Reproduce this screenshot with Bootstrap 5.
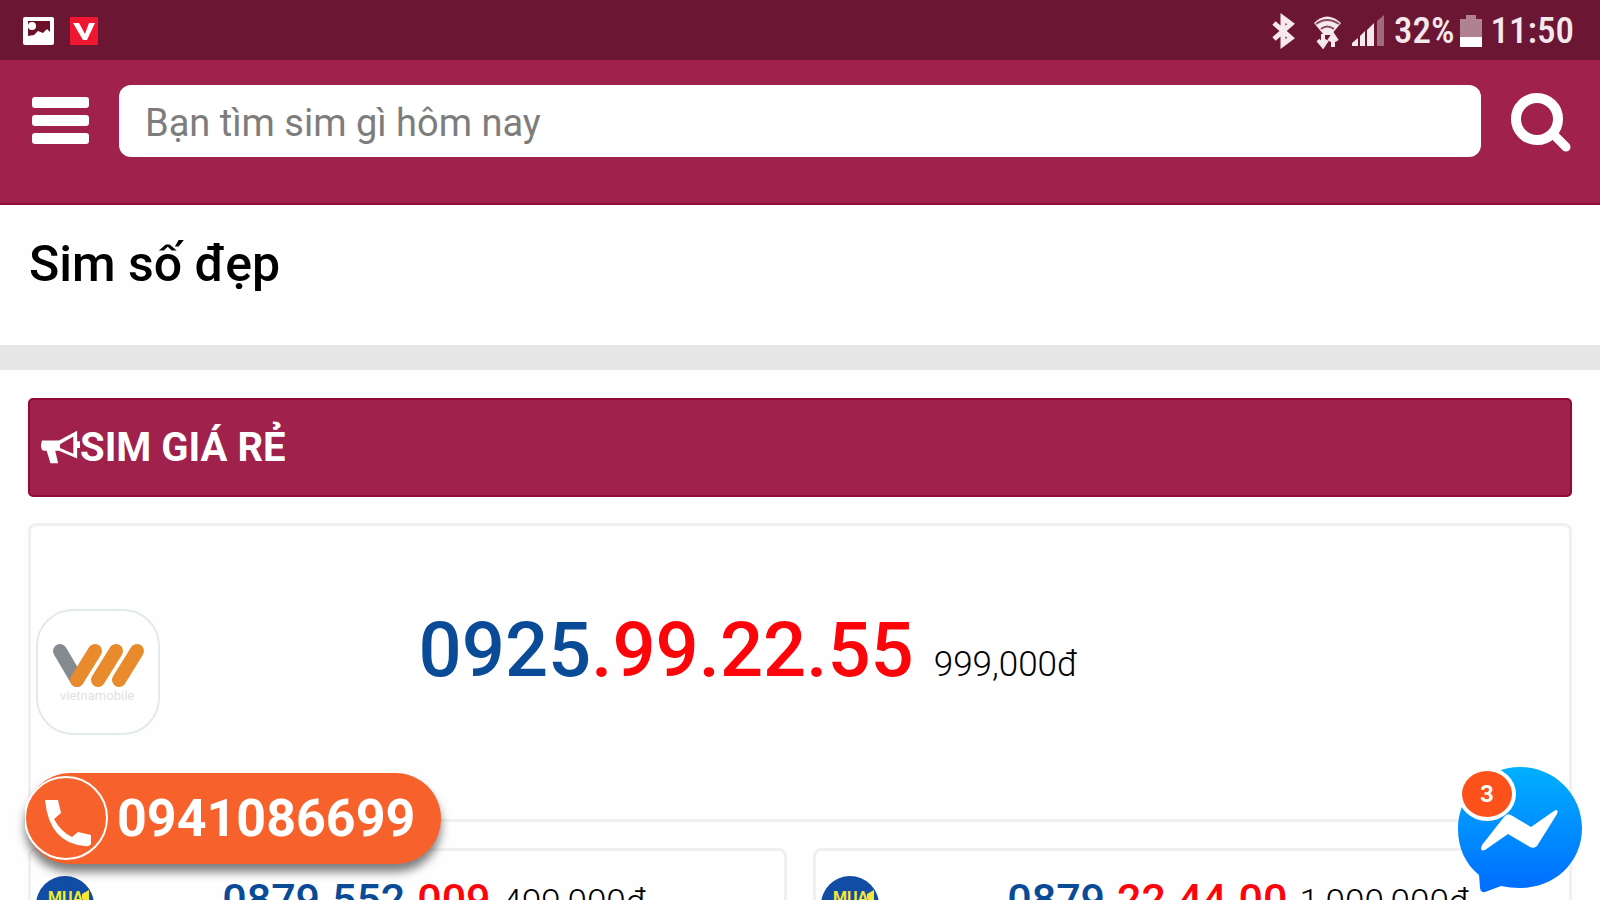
<!DOCTYPE html>
<html lang="vi">
<head>
<meta charset="utf-8">
<meta name="viewport" content="width=device-width, initial-scale=1">
<title>Sim số đẹp</title>
<link href="https://cdn.jsdelivr.net/npm/bootstrap@5.3.0/dist/css/bootstrap.min.css" rel="stylesheet">
<script src="https://cdn.jsdelivr.net/npm/bootstrap@5.3.0/dist/js/bootstrap.bundle.min.js" defer></script>
<style>
  body { font-family: Roboto, "Noto Sans", sans-serif; color: #000; background: #fefefe; height: 100vh; overflow: hidden; }
  .status-bar { background: #6b1734; height: 60px; padding: 2px 26px 0 22px; color: #f6e9ee; }
  .status-icons { gap: 13px; }
  .status-text { font-family: "Roboto Condensed", "Liberation Sans Narrow", Roboto, sans-serif; font-size: 37px; font-weight: 500; line-height: 58px; }
  .site-header { background: #9f214c; height: 145px; padding: 25px 28px 0 30px; border-bottom: 2px solid #930a3c; gap: 29px; }
  .icon-btn { border: 0; background: none; padding: 0; line-height: 0; }
  .search-box { height: 72px; border: 0; border-radius: 12px; font-size: 38px; padding: 3px 26px 0; color: #333; background: #fff; }
  .search-box::placeholder { color: #7d7d7d; opacity: 1; }
  .page-title { font-size: 50px; font-weight: 500; line-height: 60px; padding: 29px 29px 51px; }
  .divider-band { height: 25px; background: #e6e6e6; }
  .section-bar { background: #9f214c; border: 2px solid #930a34; border-radius: 5px; height: 99px; padding: 0 10px; color: #fff; }
  .section-bar h2 { font-size: 40px; font-weight: 700; line-height: 94px; }
  .content-area { padding: 28px 28px 0 28px; }
  .sim-list { gap: 26px; }
  .sim-card { border: 3px solid #f0f0f0; border-radius: 8px; background: #fefefe; color: #000; text-decoration: none; }
  .sim-logo { padding-left: 5px; }
  .sim-text { padding-left: 3px; }
  .sim-no { font-weight: 500; color: #0a4b98; }
  .sim-no span { color: #fd040a; }
  .sim-price { font-size: 35px; font-weight: 300; }
  .sim-wide { height: 299px; }
  .sim-wide .sim-text { padding-bottom: 46px; }
  .sim-wide .sim-no { font-size: 76px; line-height: 84px; margin-right: 16px; }
  .sim-half { height: 220px; padding-top: 23px; }
  .sim-half .sim-no { font-size: 43px; line-height: 50px; margin-right: 8px; }
  .call-pill { left: 25px; bottom: 36px; height: 91px; border-radius: 46px; background: #f7622c; color: #fff; font-size: 52px; font-weight: 700; padding-right: 26px; gap: 8px; box-shadow: 0 8px 10px rgba(0,0,0,.5); text-decoration: none; }
  .chat-btn { right: 16px; bottom: 5px; }
  .chat-count { left: 6px; top: 6px; width: 50px; height: 46px; border-radius: 50%; background: #fd511c; color: #fff; font-size: 24px; font-weight: 700; line-height: 46px; box-shadow: 0 0 0 4px #fff; }
</style>
</head>
<body>
<div class="status-bar d-flex align-items-center justify-content-between">
  <div class="d-flex align-items-center status-icons">
    <svg width="34" height="32" viewBox="0 0 34 32"><rect x="1" y="2" width="31" height="28" rx="2" fill="#fff"/><path d="M6 6H28V17L25 14L21 18L16 16L12 20L6 21Z" fill="#6b1027"/><circle cx="10" cy="11" r="4" fill="#fff"/></svg>
    <svg width="30" height="30" viewBox="0 0 30 30"><rect x="1" y="1" width="28" height="28" rx="1" fill="#ef1730"/><path d="M4 7H10L16 18L20 7H26L18 24H14Z" fill="#fff"/></svg>
  </div>
  <div class="d-flex align-items-center status-text">
    <svg width="25" height="36" viewBox="0 0 25 36" fill="none" stroke="#f6e9ee" stroke-width="5"><path d="M3 10L20 25L12 31V5L20 11L3 26"/></svg>
    <svg class="ms-3" width="32" height="36" viewBox="0 0 32 36"><path d="M2 10Q15 -3 29 10L19 22H12Z" fill="#f6e9ee"/><path d="M4 11Q15 3 27 11M9 16Q15 11 22 16" fill="none" stroke="#8d4a62" stroke-width="2"/><path d="M11 21V32M6 27L11 33L15 27M21 34V22M17 28L21 22L25 28" fill="none" stroke="#f6e9ee" stroke-width="4"/></svg>
    <svg class="ms-2" width="34" height="34" viewBox="0 0 34 34" fill="#f6e9ee"><path d="M0 32V29L6 24V32ZM8 32V22L13 17V32ZM15 32V16L22 9V32Z"/><path d="M25 32V7L32 1V32Z" opacity=".4"/></svg>
    <span class="ms-2">32%</span>
    <svg class="ms-1" width="24" height="34" viewBox="0 0 24 34"><path d="M1 5H7V1H17V5H23V33H1Z" fill="#b08093"/><path d="M1 23H23V33H1Z" fill="#fff"/></svg>
    <span class="ms-2">11:50</span>
  </div>
</div>
<header class="site-header d-flex align-items-start">
  <button class="icon-btn mt-2" type="button" aria-label="Menu">
    <svg width="60" height="56" viewBox="0 0 60 56" fill="#fff"><rect x="2" y="4" width="57" height="11" rx="3"/><rect x="2" y="22" width="57" height="11" rx="3"/><rect x="2" y="40" width="57" height="11" rx="3"/></svg>
  </button>
  <input class="form-control search-box flex-fill" type="search" placeholder="Bạn tìm sim gì hôm nay" aria-label="Bạn tìm sim gì hôm nay">
  <button class="icon-btn mt-2" type="button" aria-label="Tìm">
    <svg width="62" height="62" viewBox="0 0 62 62" fill="none" stroke="#fff"><circle cx="27" cy="26" r="21" stroke-width="10"/><path d="M43 41L56 54" stroke-width="9" stroke-linecap="round"/></svg>
  </button>
</header>
<h1 class="page-title m-0">Sim số đẹp</h1>
<div class="divider-band"></div>
<main class="content-area">
  <div class="d-flex flex-column sim-list">
    <div class="section-bar d-flex align-items-center">
      <svg width="40" height="40" viewBox="0 0 42 40"><path d="M2 12H20L39 2V31L20 23H16L19 36H11L7 23H4Q1 22 1 17Z" fill="#fff"/><path d="M21 16L35 8V26L21 20Z" fill="#9f214c"/><rect x="38" y="13" width="4" height="7" fill="#fff"/></svg>
      <h2 class="m-0">SIM GIÁ RẺ</h2>
    </div>
    <a href="#" class="sim-card sim-wide row g-0 align-items-center">
      <div class="col-3 sim-logo">
        <svg width="125" height="127" viewBox="0 0 125 127"><rect x="1" y="1" width="122" height="124" rx="36" fill="#fff" stroke="#e3eaea" stroke-width="2"/><g fill="none" stroke-width="14" stroke-linecap="round"><path d="M24 42L41 71" stroke="#868b91"/><path d="M59 42L41 71M80 42L62 71M101 42L83 71" stroke="#e98a2d"/></g><text x="24" y="91" font-size="13" fill="#dfe2e4">vietnamobile</text></svg>
      </div>
      <div class="col-9 sim-text text-nowrap"><strong class="sim-no">0925<span>.99.22.55</span></strong> <span class="sim-price">999,000đ</span></div>
    </a>
    <div class="d-flex sim-list">
      <a href="#" class="sim-card sim-half row g-0 flex-fill w-50 align-content-start">
        <div class="col-3 sim-logo">
          <svg width="58" height="62" viewBox="0 0 58 62"><circle cx="29" cy="31" r="29" fill="#124da5"/><text x="12" y="29" font-size="16" font-weight="700" fill="#f2e930">MUA</text><path d="M46 20L53 16V29L46 25Z" fill="#f2e930"/></svg>
        </div>
        <div class="col-9 sim-text text-nowrap"><strong class="sim-no">0879.552<span>.009</span></strong> <span class="sim-price">499,000đ</span></div>
      </a>
      <a href="#" class="sim-card sim-half row g-0 flex-fill w-50 align-content-start">
        <div class="col-3 sim-logo">
          <svg width="58" height="62" viewBox="0 0 58 62"><circle cx="29" cy="31" r="29" fill="#124da5"/><text x="12" y="29" font-size="16" font-weight="700" fill="#f2e930">MUA</text><path d="M46 20L53 16V29L46 25Z" fill="#f2e930"/></svg>
        </div>
        <div class="col-9 sim-text text-nowrap"><strong class="sim-no">0879<span>.22.44.00</span></strong> <span class="sim-price">1,000,000đ</span></div>
      </a>
    </div>
  </div>
</main>
<a href="tel:0941086699" class="call-pill position-fixed d-flex align-items-center">
  <svg width="84" height="88" viewBox="0 0 84 88"><circle cx="41" cy="43" r="41" fill="none" stroke="#fff" stroke-width="2"/><path d="M20 25H33L36 38L29 44Q36 57 47 62L53 57L66 60V69Q64 72 60 71Q24 68 20 25Z" fill="#fff"/></svg>
  0941086699
</a>
<button type="button" class="icon-btn chat-btn position-fixed" aria-label="Messenger">
  <svg width="128" height="130" viewBox="0 0 128 130">
    <defs><linearGradient id="chatBlue" x1="0" y1="0" x2="0" y2="1"><stop offset="0" stop-color="#00b0ff"/><stop offset="1" stop-color="#006cff"/></linearGradient></defs>
    <path d="M64 2C99 2 126 30 126 63C126 98 98 123 64 123Q54 123 45 121L29 127Q24 128 24 122L23 110C9 99 2 82 2 64C2 29 30 2 64 2Z" fill="url(#chatBlue)"/>
    <path d="M26 80L48 52Q51 48 55 50L75 62L98 46Q103 43 101 49L81 81Q78 84 74 82L52 69L29 85Q23 87 26 80Z" fill="#fff"/>
  </svg>
  <span class="chat-count position-absolute text-center">3</span>
</button>
</body>
</html>
